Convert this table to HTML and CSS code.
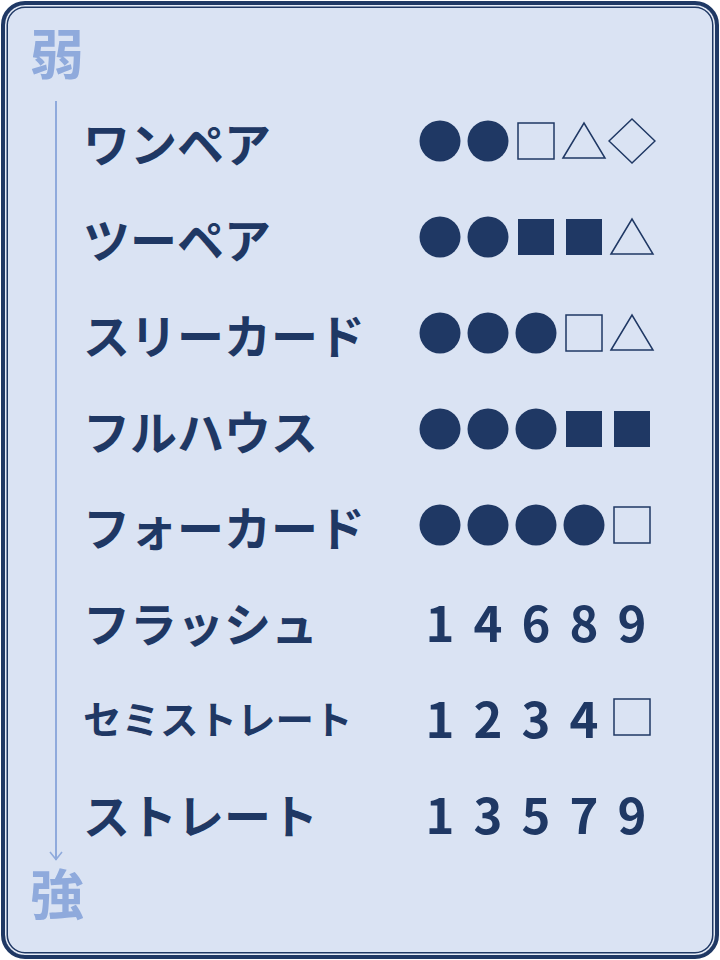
FILE: index.html
```html
<!DOCTYPE html>
<html lang="ja">
<head>
<meta charset="utf-8">
<title>役の強さ</title>
<link rel="stylesheet" href="styles.css">
</head>
<body>
<div class="card">
  <div class="weak">弱</div>
  <div class="arrow">
    <div class="shaft"></div>
    <svg class="head" width="14" height="10" viewBox="0 0 14 10"><polyline points="1,1 7,8.5 13,1" fill="none" stroke="#8faadc" stroke-width="1.6"/></svg>
  </div>
  <div class="strong">強</div>
  <div class="hands">
    <div class="hand">
      <div class="name">ワンペア</div>
      <div class="pattern">
        <svg class="cell" viewBox="0 0 48 48"><circle cx="24" cy="24" r="20.5" class="fill"/></svg>
        <svg class="cell" viewBox="0 0 48 48"><circle cx="24" cy="24" r="20.5" class="fill"/></svg>
        <svg class="cell" viewBox="0 0 48 48"><rect x="6" y="6" width="36" height="36" class="line"/></svg>
        <svg class="cell" viewBox="0 0 48 48"><polygon points="3,41 24,6 45,41" class="line"/></svg>
        <svg class="cell" viewBox="0 0 48 48"><polygon points="1,24 24,2 47,24 24,46" class="line"/></svg>
      </div>
    </div>
    <div class="hand">
      <div class="name">ツーペア</div>
      <div class="pattern">
        <svg class="cell" viewBox="0 0 48 48"><circle cx="24" cy="24" r="20.5" class="fill"/></svg>
        <svg class="cell" viewBox="0 0 48 48"><circle cx="24" cy="24" r="20.5" class="fill"/></svg>
        <svg class="cell" viewBox="0 0 48 48"><rect x="6" y="6" width="36" height="36" class="fill"/></svg>
        <svg class="cell" viewBox="0 0 48 48"><rect x="6" y="6" width="36" height="36" class="fill"/></svg>
        <svg class="cell" viewBox="0 0 48 48"><polygon points="3,41 24,6 45,41" class="line"/></svg>
      </div>
    </div>
    <div class="hand">
      <div class="name">スリーカード</div>
      <div class="pattern">
        <svg class="cell" viewBox="0 0 48 48"><circle cx="24" cy="24" r="20.5" class="fill"/></svg>
        <svg class="cell" viewBox="0 0 48 48"><circle cx="24" cy="24" r="20.5" class="fill"/></svg>
        <svg class="cell" viewBox="0 0 48 48"><circle cx="24" cy="24" r="20.5" class="fill"/></svg>
        <svg class="cell" viewBox="0 0 48 48"><rect x="6" y="6" width="36" height="36" class="line"/></svg>
        <svg class="cell" viewBox="0 0 48 48"><polygon points="3,41 24,6 45,41" class="line"/></svg>
      </div>
    </div>
    <div class="hand">
      <div class="name">フルハウス</div>
      <div class="pattern">
        <svg class="cell" viewBox="0 0 48 48"><circle cx="24" cy="24" r="20.5" class="fill"/></svg>
        <svg class="cell" viewBox="0 0 48 48"><circle cx="24" cy="24" r="20.5" class="fill"/></svg>
        <svg class="cell" viewBox="0 0 48 48"><circle cx="24" cy="24" r="20.5" class="fill"/></svg>
        <svg class="cell" viewBox="0 0 48 48"><rect x="6" y="6" width="36" height="36" class="fill"/></svg>
        <svg class="cell" viewBox="0 0 48 48"><rect x="6" y="6" width="36" height="36" class="fill"/></svg>
      </div>
    </div>
    <div class="hand">
      <div class="name">フォーカード</div>
      <div class="pattern">
        <svg class="cell" viewBox="0 0 48 48"><circle cx="24" cy="24" r="20.5" class="fill"/></svg>
        <svg class="cell" viewBox="0 0 48 48"><circle cx="24" cy="24" r="20.5" class="fill"/></svg>
        <svg class="cell" viewBox="0 0 48 48"><circle cx="24" cy="24" r="20.5" class="fill"/></svg>
        <svg class="cell" viewBox="0 0 48 48"><circle cx="24" cy="24" r="20.5" class="fill"/></svg>
        <svg class="cell" viewBox="0 0 48 48"><rect x="6" y="6" width="36" height="36" class="line"/></svg>
      </div>
    </div>
    <div class="hand">
      <div class="name">フラッシュ</div>
      <div class="pattern">
        <span class="num">1</span><span class="num">4</span><span class="num">6</span><span class="num">8</span><span class="num">9</span>
      </div>
    </div>
    <div class="hand">
      <div class="name small">セミストレート</div>
      <div class="pattern">
        <span class="num">1</span><span class="num">2</span><span class="num">3</span><span class="num">4</span>
        <svg class="cell" viewBox="0 0 48 48"><rect x="6" y="6" width="36" height="36" class="line"/></svg>
      </div>
    </div>
    <div class="hand">
      <div class="name">ストレート</div>
      <div class="pattern">
        <span class="num">1</span><span class="num">3</span><span class="num">5</span><span class="num">7</span><span class="num">9</span>
      </div>
    </div>
  </div>
</div>
</body>
</html>
```

FILE: styles.css
```css
html, body {
  margin: 0;
  padding: 0;
  background: #ffffff;
}
body {
  padding: 1px;
  font-family: "Noto Sans CJK JP", "Noto Sans", sans-serif;
}
.card {
  box-sizing: border-box;
  width: 718px;
  height: 958px;
  border: 4px solid #1f3864;
  border-radius: 24px;
  background: #dae3f3;
  box-shadow: inset 0 0 0 1.5px #e6ecf7, inset 0 0 0 3px #1f3864;
  display: grid;
  grid-template-columns: 80px 1fr;
  grid-template-rows: 88px 768px 1fr;
}
.weak, .strong {
  grid-column: 1;
  font-size: 54px;
  line-height: 1;
  font-weight: 700;
  color: #8faadc;
  padding-left: 25px;
}
.weak {
  grid-row: 1;
  padding-top: 20px;
}
.strong {
  grid-row: 3;
  padding-top: 4px;
}
.arrow {
  grid-column: 1;
  grid-row: 2;
  display: flex;
  flex-direction: column;
  align-items: center;
  width: 14px;
  margin-left: 44px;
  padding-top: 8px;
}
.shaft {
  flex: 1;
  width: 2.5px;
  background: #8faadc;
}
.head {
  display: block;
  margin-top: -9px;
}
.hands {
  grid-column: 2;
  grid-row: 2;
  display: grid;
  grid-auto-rows: 96px;
}
.hand {
  display: grid;
  grid-template-columns: 331px 240px;
  align-items: center;
}
.name {
  font-size: 47px;
  font-weight: 700;
  line-height: 1;
  color: #1f3864;
  white-space: nowrap;
  margin-left: -2px;
}
.name.small {
  font-size: 38.5px;
}
.pattern {
  display: flex;
  height: 48px;
}
.cell {
  display: block;
  width: 48px;
  height: 48px;
  flex: none;
}
.fill {
  fill: #1f3864;
}
.line {
  fill: none;
  stroke: #1f3864;
  stroke-width: 1.5;
}
.num {
  width: 48px;
  height: 48px;
  flex: none;
  text-align: center;
  font-size: 49px;
  font-weight: 700;
  line-height: 48px;
  color: #1f3864;
}
```
